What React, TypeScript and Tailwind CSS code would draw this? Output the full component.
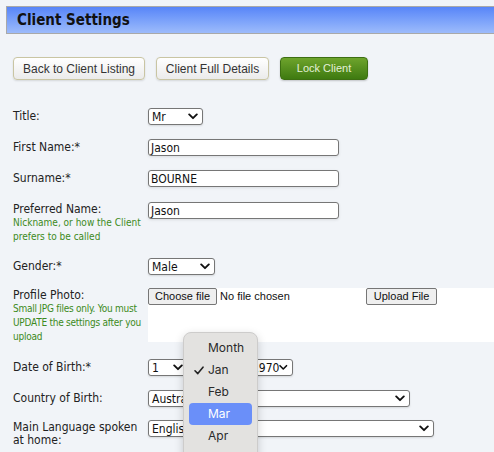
import React from "react";

const tahoma = { fontFamily: '"DejaVu Sans Condensed", "DejaVu Sans", sans-serif' };
const arial = { fontFamily: '"Liberation Sans", Arial, sans-serif' };
const sys = { fontFamily: 'Inter, "Noto Sans", sans-serif' };

function Chevron({ className = "" }: { className?: string }) {
  return (
    <svg width="10" height="7" viewBox="0 0 10 7" className={className}>
      <path d="M1.2 1.4 L5 5.2 L8.8 1.4" fill="none" stroke="#111" strokeWidth="1.9" strokeLinecap="round" strokeLinejoin="round" />
    </svg>
  );
}

function Select({ value, w, italic = false }: { value: string; w: string; italic?: boolean }) {
  return (
    <div
      className={`${w} h-[17px] flex items-center justify-between bg-white border border-[#767676] rounded-[3px] pl-[3px] pr-[4px] text-[12px] text-[#111] shadow-[0_1px_2px_rgba(0,0,0,0.12)] overflow-hidden`}
      style={tahoma}
    >
      <span className={italic ? "italic" : ""}>{value}</span>
      <Chevron />
    </div>
  );
}

function TextInput({ value }: { value: string }) {
  return (
    <div
      className="w-[191px] h-[17px] flex items-center bg-white border border-[#767676] rounded-[3px] px-[2px] text-[12px] text-[#111] shadow-[0_1px_3px_rgba(0,0,0,0.1)]"
      style={tahoma}
    >
      {value}
    </div>
  );
}

function Label({ children, className = "" }: { children: React.ReactNode; className?: string }) {
  return (
    <div className={`text-[12px] text-[#222] ${className}`} style={tahoma}>
      {children}
    </div>
  );
}

function Sub({ children, className = "" }: { children: React.ReactNode; className?: string }) {
  return (
    <div className={`text-[10px] text-[#3c8a22] whitespace-nowrap ${className}`} style={tahoma}>
      {children}
    </div>
  );
}

export default function App() {
  return (
    <div className="relative w-[494px] h-[452px] overflow-hidden bg-[#f1f4f8]">
      {/* header */}
      <div className="ml-[6px] mt-[6px] h-[28px] border-y border-l border-[#a9a9a9] bg-gradient-to-b from-[#5885f8] to-[#9dbbfb] flex items-center pl-[10px]">
        <span className="text-[15px] font-bold text-[#111]" style={tahoma}>
          Client Settings
        </span>
      </div>

      {/* buttons */}
      <div className="ml-[13px] mt-[23px] flex gap-[11px]" style={arial}>
        <div className="w-[132px] h-[23px] flex items-center justify-center rounded-[4px] border border-[#c9c5a3] bg-gradient-to-b from-white to-[#ebebeb] text-[12px] text-[#333] shadow-[0_1px_2px_rgba(0,0,0,0.12)]">
          Back to Client Listing
        </div>
        <div className="w-[113px] h-[23px] flex items-center justify-center rounded-[4px] border border-[#c9c5a3] bg-gradient-to-b from-white to-[#ebebeb] text-[12px] text-[#333] shadow-[0_1px_2px_rgba(0,0,0,0.12)]">
          Client Full Details
        </div>
        <div className="w-[88px] h-[23px] flex items-center justify-center rounded-[4px] border border-[#3d6f12] bg-gradient-to-b from-[#6ea42c] to-[#3e7a10] text-[11px] text-[#e4f0d8] shadow-[0_1px_2px_rgba(0,0,0,0.2)]">
          Lock Client
        </div>
      </div>

      {/* form */}
      <div className="pl-[13px] mt-[28px] flex flex-col">
        <div className="flex">
          <Label className="w-[135px] leading-[17px]">Title:</Label>
          <Select value="Mr" w="w-[55px]" />
        </div>

        <div className="flex mt-[14px]">
          <Label className="w-[135px] leading-[17px]">First Name:*</Label>
          <TextInput value="Jason" />
        </div>

        <div className="flex mt-[14px]">
          <Label className="w-[135px] leading-[17px]">Surname:*</Label>
          <TextInput value="BOURNE" />
        </div>

        <div className="flex mt-[15px]">
          <div className="w-[135px] shrink-0">
            <Label className="leading-[15px]">Preferred Name:</Label>
            <Sub className="leading-[13.5px] -mt-[1px]">
              Nickname, or how the Client
              <br />
              prefers to be called
            </Sub>
          </div>
          <TextInput value="Jason" />
        </div>

        <div className="flex mt-[15px]">
          <Label className="w-[135px] leading-[17px]">Gender:*</Label>
          <Select value="Male" w="w-[67px]" />
        </div>

        <div className="flex mt-[13px]">
          <div className="w-[135px] shrink-0">
            <Label className="leading-[15px]">Profile Photo:</Label>
            <Sub className="leading-[14px] -mt-[1px] tracking-[-0.25px]">
              Small JPG files only. You must
              <br />
              UPDATE the settings after you
              <br />
              upload
            </Sub>
          </div>
          <div className="flex-1 h-[54px] bg-white flex items-start text-[11px] text-[#111]" style={arial}>
            <div className="h-[17px] px-[6px] flex items-center bg-[#efefef] border border-[#767676] rounded-[2px]">
              Choose file
            </div>
            <span className="ml-[3px] leading-[17px]">No file chosen</span>
            <div className="ml-[76px] h-[17px] px-[7px] flex items-center bg-[#efefef] border border-[#767676] rounded-[2px]">
              Upload File
            </div>
          </div>
        </div>

        <div className="flex mt-[15px]">
          <Label className="w-[135px] leading-[17px]">Date of Birth:*</Label>
          <div className="flex gap-[4px]">
            <Select value="1" w="w-[40px]" />
            <Select value="Jan" w="w-[52px]" />
            <Select value="1970" w="w-[45px]" />
          </div>
        </div>

        <div className="flex mt-[14px]">
          <Label className="w-[135px] leading-[17px]">Country of Birth:</Label>
          <Select value="Australia" w="w-[262px]" />
        </div>

        <div className="flex mt-[13px]">
          <Label className="w-[135px] leading-[13px] pt-[1px]">
            Main Language spoken
            <br />
            at home:
          </Label>
          <Select value="English" w="w-[286px]" />
        </div>
      </div>

      {/* open month dropdown */}
      <div
        className="absolute left-[183px] top-[332px] w-[75px] h-[140px] rounded-[8px] bg-[#e3e2e0] border border-[#cdcccb] shadow-[0_3px_10px_rgba(0,0,0,0.18)] pt-[4px] px-[5px] text-[12px] text-[#2a2a2a]"
        style={sys}
      >
        {["Month", "Jan", "Feb", "Mar", "Apr"].map((m) => (
          <div
            key={m}
            className={`relative h-[22px] flex items-center pl-[19px] rounded-[4px] ${m === "Mar" ? "bg-[#6a8ff9] text-white" : ""}`}
          >
            {m === "Jan" && (
              <svg width="10" height="9" viewBox="0 0 10 9" className="absolute left-[5px] top-[7px]">
                <path d="M1 4.8 L3.8 7.6 L9 1.2" fill="none" stroke="#222" strokeWidth="1.6" strokeLinecap="round" strokeLinejoin="round" />
              </svg>
            )}
            {m}
          </div>
        ))}
      </div>
    </div>
  );
}
